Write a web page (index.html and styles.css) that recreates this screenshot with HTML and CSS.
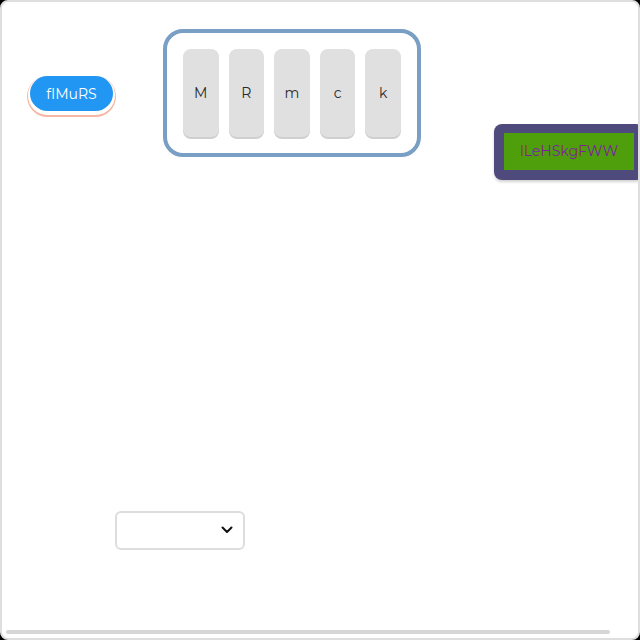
FILE: index.html
```html
<!DOCTYPE html>
<html>
<head>
<meta charset="utf-8">
<link rel="stylesheet" href="styles.css">
</head>
<body>
<div class="frame">
  <div class="viewport">
    <div class="stage">
      <div class="row">
        <button class="pill">fIMuRS</button>
        <div class="keys">
          <div class="key">M</div>
          <div class="key">R</div>
          <div class="key">m</div>
          <div class="key">c</div>
          <div class="key">k</div>
        </div>
        <div class="badge-box">
          <div class="badge">lLeHSkgFWW</div>
        </div>
      </div>
      <div class="select-wrap">
        <div class="select"></div>
        <svg class="chevron" width="12" height="8" viewBox="0 0 12 8"><path d="M1.5 1.5 L6 6 L10.5 1.5" fill="none" stroke="#111" stroke-width="2" stroke-linecap="round" stroke-linejoin="round"/></svg>
      </div>
    </div>
  </div>
  <div class="hscroll"><div class="hthumb"></div></div>
</div>
</body>
</html>
```
FILE: styles.css
```css
html, body {
  margin: 0;
  padding: 0;
  background: #000;
}
.frame {
  width: 640px;
  height: 640px;
  box-sizing: border-box;
  border: 2px solid #dedede;
  border-radius: 8px;
  background: #fff;
  overflow: hidden;
  display: flex;
  flex-direction: column;
  font-family: "Montserrat", "Open Sans", "Noto Sans", sans-serif;
}
.viewport {
  flex: 1;
  overflow: hidden;
}
.hscroll {
  height: 12px;
  padding: 4px;
  box-sizing: border-box;
}
.hthumb {
  width: 604px;
  height: 4px;
  border-radius: 2px;
  background: #d6d6d6;
}
.stage {
  display: flex;
  flex-direction: column;
  align-items: flex-start;
  width: max-content;
}
.row {
  display: flex;
  align-items: flex-start;
}
.pill {
  margin: 74px 0 0 28px;
  width: 83px;
  height: 35px;
  border: none;
  border-radius: 18px;
  background: #2196f3;
  color: #fff;
  font-family: inherit;
  font-size: 14px;
  padding: 0;
  box-shadow: 0 2px 0 2px #fff, 0 3px 0 3px #f6b8a4;
}
.keys {
  margin: 27px 0 0 50px;
  display: flex;
  gap: 10px;
  padding: 16px;
  border: 4px solid #7a9fc4;
  border-radius: 20px;
}
.key {
  width: 35.6px;
  height: 88px;
  border-radius: 8px;
  background: #e0e0e0;
  box-shadow: 0 2px 0 #cfcfcf;
  display: flex;
  align-items: center;
  justify-content: center;
  font-size: 14px;
  color: #2a2a2a;
}
.badge-box {
  margin: 122px 15px 0 73px;
  padding: 9px 10px 10px;
  background: #4e4b7c;
  border-radius: 8px;
  box-shadow: 0 2px 3px rgba(0, 0, 0, 0.18);
}
.badge {
  background: #4f9e0b;
  color: #7b1fa2;
  font-size: 14px;
  line-height: 37px;
  padding: 0 16px;
}
.select-wrap {
  position: relative;
  margin: 331px 0 0 113px;
}
.select {
  width: 130px;
  height: 39px;
  box-sizing: border-box;
  border: 2px solid #dddddd;
  border-radius: 6px;
  background: #fff;
}
.chevron {
  position: absolute;
  left: 106px;
  top: 15px;
}
```
